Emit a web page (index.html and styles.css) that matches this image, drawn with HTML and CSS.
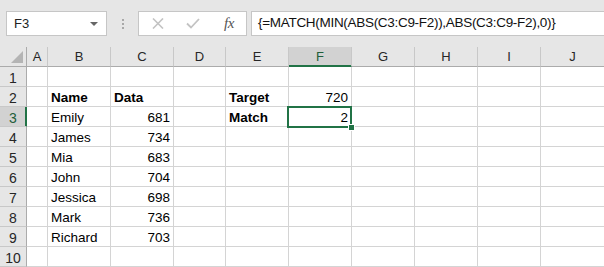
FILE: index.html
```html
<!DOCTYPE html>
<html lang="en">
<head>
    <meta charset="UTF-8">
    <meta name="viewport" content="width=device-width, initial-scale=1.0">
    <title>MATCH closest value</title>
    <link rel="stylesheet" href="styles.css">
</head>
<body>
    <div class="toolbar">
        <div class="name-box">
            <span>F3</span>
            <span class="arrow"></span>
        </div>
        <div class="grip"><i></i><i></i><i></i></div>
        <div class="buttons">
            <svg class="btn-x" width="12" height="11" viewBox="0 0 12 11"><path d="M1 0.5 L11 10.5 M11 0.5 L1 10.5" stroke="#c3c3c3" stroke-width="1.6" fill="none"/></svg>
            <svg class="btn-ok" width="14" height="11" viewBox="0 0 14 11"><path d="M1 5.5 L5 9.5 L13 1" stroke="#c3c3c3" stroke-width="1.8" fill="none"/></svg>
            <span class="fx">fx</span>
        </div>
        <div class="formula">{=MATCH(MIN(ABS(C3:C9-F2)),ABS(C3:C9-F2),0)}</div>
    </div>

    <table class="sheet">
        <colgroup>
            <col class="c-hdr"><col class="c-a"><col class="c-b"><col class="c-c"><col class="c-d">
            <col class="c-e"><col class="c-f"><col class="c-g"><col class="c-h"><col class="c-i"><col class="c-j">
        </colgroup>
        <tr class="head">
            <th class="corner"><span class="tri"></span></th>
            <th>A</th><th>B</th><th>C</th><th>D</th><th>E</th><th class="sel">F</th><th>G</th><th>H</th><th>I</th><th>J</th>
        </tr>
        <tr><th>1</th><td></td><td></td><td></td><td></td><td></td><td></td><td></td><td></td><td></td><td></td></tr>
        <tr><th>2</th><td></td><td class="b">Name</td><td class="b">Data</td><td></td><td class="b">Target</td><td class="n">720</td><td></td><td></td><td></td><td></td></tr>
        <tr><th class="sel">3</th><td></td><td>Emily</td><td class="n">681</td><td></td><td class="b">Match</td><td class="n active">2<span class="frame"><span class="handle"></span></span></td><td></td><td></td><td></td><td></td></tr>
        <tr><th>4</th><td></td><td>James</td><td class="n">734</td><td></td><td></td><td></td><td></td><td></td><td></td><td></td></tr>
        <tr><th>5</th><td></td><td>Mia</td><td class="n">683</td><td></td><td></td><td></td><td></td><td></td><td></td><td></td></tr>
        <tr><th>6</th><td></td><td>John</td><td class="n">704</td><td></td><td></td><td></td><td></td><td></td><td></td><td></td></tr>
        <tr><th>7</th><td></td><td>Jessica</td><td class="n">698</td><td></td><td></td><td></td><td></td><td></td><td></td><td></td></tr>
        <tr><th>8</th><td></td><td>Mark</td><td class="n">736</td><td></td><td></td><td></td><td></td><td></td><td></td><td></td></tr>
        <tr><th>9</th><td></td><td>Richard</td><td class="n">703</td><td></td><td></td><td></td><td></td><td></td><td></td><td></td></tr>
        <tr><th>10</th><td></td><td></td><td></td><td></td><td></td><td></td><td></td><td></td><td></td><td></td></tr>
    </table>
</body>
</html>
```

FILE: styles.css
```css
html, body {
    margin: 0;
    padding: 0;
    overflow: hidden;
}
body {
    font-family: "Liberation Sans", Arial, sans-serif;
    background-color: #e6e6e6;
    width: 604px;
    height: 267px;
}
.toolbar {
    display: flex;
    align-items: flex-start;
    height: 47px;
    padding-top: 11px;
    box-sizing: border-box;
}
.name-box {
    display: flex;
    align-items: center;
    justify-content: space-between;
    margin-left: 6px;
    width: 101px;
    height: 25px;
    box-sizing: border-box;
    border: 1px solid #c6c6c6;
    background-color: #fff;
    padding: 0 8px 0 7px;
    font-size: 13px;
    color: #222;
}
.arrow {
    width: 0;
    height: 0;
    border-left: 4px solid transparent;
    border-right: 4px solid transparent;
    border-top: 4px solid #666;
}
.grip {
    width: 31px;
    height: 25px;
    display: flex;
    flex-direction: column;
    align-items: center;
    justify-content: center;
    gap: 2px;
}
.grip i {
    display: block;
    width: 2px;
    height: 2px;
    background-color: #a8a8a8;
}
.buttons {
    display: flex;
    align-items: center;
    width: 109px;
    height: 25px;
    box-sizing: border-box;
    border: 1px solid #c6c6c6;
    background-color: #fff;
}
.btn-x {
    margin-left: 13px;
}
.btn-ok {
    margin-left: 22px;
}
.fx {
    margin-left: 24px;
    font-family: "Liberation Serif", "Times New Roman", serif;
    font-style: italic;
    font-size: 15px;
    color: #555;
    letter-spacing: -0.5px;
}
.formula {
    flex: 1;
    margin-left: 4px;
    margin-right: -2px;
    height: 25px;
    box-sizing: border-box;
    border: 1px solid #c6c6c6;
    background-color: #fff;
    padding: 0 0 0 6px;
    font-size: 13.5px;
    letter-spacing: -0.3px;
    line-height: 22px;
    color: #111;
    white-space: nowrap;
}
.sheet {
    border-collapse: separate;
    border-spacing: 0;
    table-layout: fixed;
    width: 605px;
    background-color: #fff;
}
.c-hdr { width: 27px; }
.c-a { width: 21px; }
.c-b, .c-c, .c-e, .c-f, .c-g, .c-h, .c-i { width: 63px; }
.c-d { width: 52px; }
.c-j { width: 64px; }
.sheet td, .sheet th {
    height: 20px;
    box-sizing: border-box;
    padding: 3px 3px 0 3px;
    border-right: 1px solid #d4d4d4;
    border-bottom: 1px solid #d4d4d4;
    font-size: 13.5px;
    line-height: 16px;
    color: #000;
    white-space: nowrap;
    overflow: visible;
    text-align: left;
    font-weight: normal;
    vertical-align: top;
}
.sheet th {
    background-color: #e6e6e6;
    text-align: center;
    color: #262626;
    font-size: 14px;
    border-right-color: #c8c8c8;
    border-bottom-color: #c8c8c8;
    padding: 3px 0 0 0;
}
.sheet tr.head th {
    font-size: 13px;
    border-bottom-color: #ababab;
    padding-top: 2px;
}
.sheet tr th:first-child {
    border-right-color: #ababab;
}
.sheet th.sel {
    background-color: #d2d2d2;
    color: #1e5e3a;
}
.sheet tr.head th.sel {
    border-bottom-color: #217346;
    box-shadow: inset 0 -1px 0 #217346;
}
.sheet tr th.sel:first-child {
    border-right-color: #217346;
    box-shadow: inset -1px 0 0 #217346;
}
.corner {
    position: relative;
}
.tri {
    position: absolute;
    right: 3px;
    bottom: 3px;
    width: 12px;
    height: 12px;
    background-color: #b4b4b4;
    clip-path: polygon(100% 0, 100% 100%, 0 100%);
}
.sheet td.b {
    font-weight: bold;
}
.sheet td.n {
    text-align: right;
}
.sheet td.active {
    position: relative;
}
.frame {
    position: absolute;
    top: -1px;
    left: -2px;
    right: -1px;
    bottom: -2px;
    border: 2px solid #217346;
}
.handle {
    position: absolute;
    right: -5px;
    bottom: -5px;
    width: 5px;
    height: 5px;
    background-color: #217346;
    border: 1px solid #fff;
}
```
